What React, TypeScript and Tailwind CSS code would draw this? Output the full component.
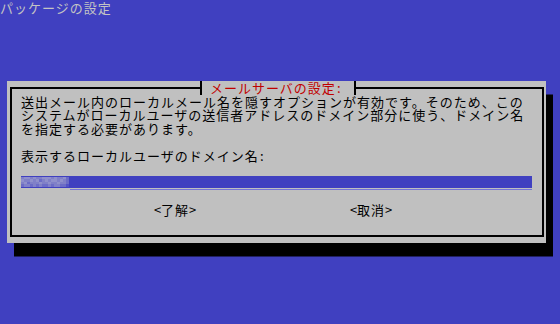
const mosaic = [
  [2, 3, 3, 2, 3, 2, 2, 3, 3, 3, 2, 3, 2, 2, 3, 1],
  [3, 2, 2, 3, 2, 3, 1, 2, 3, 2, 3, 3, 2, 3, 2, 1],
  [2, 3, 1, 2, 2, 2, 3, 2, 2, 3, 2, 2, 3, 2, 2, 1],
  [1, 2, 2, 1, 2, 1, 2, 1, 1, 2, 1, 2, 2, 1, 1, 0],
];

const shades = ["bg-[#5252c4]", "bg-[#6c6cc6]", "bg-[#8080c8]", "bg-[#9090cc]"];

function Row({ children, className = "" }: { children?: React.ReactNode; className?: string }) {
  return <div className={"h-[13.5px] whitespace-nowrap " + className}>{children}</div>;
}

function Half({ ch }: { ch: string }) {
  return <span className="inline-block w-[7px] text-center align-top">{ch}</span>;
}

function Button({ label }: { label: string }) {
  return (
    <span className="flex text-black">
      <Half ch="<" />
      <span>{label}</span>
      <Half ch=">" />
    </span>
  );
}

export default function App() {
  return (
    <div
      className="w-[560px] h-[324px] overflow-hidden bg-[#4040c0] text-[13px] leading-[13.5px] tracking-[1px]"
      style={{ fontFamily: '"Noto Sans CJK JP", "Noto Sans", sans-serif' }}
    >
      <Row className="text-[#c4c4c4] pt-[0.5px]">パッケージの設定</Row>

      <div className="relative mt-[67.5px] ml-[7px] w-[539px] h-[162px] bg-[#c0c0c0] pt-[6px] pl-[3px] pr-[2px] shadow-[7px_13.5px_0_#000]">
        {/* title sits on the top border */}
        <div className="absolute left-[193px] top-0 flex h-[13.5px]">
          <span className="w-[2px] h-full bg-black" />
          <div className="w-[152px] h-full bg-[#c0c0c0] pl-[8px] text-[#c00000] whitespace-nowrap">
            メールサーバの設定<Half ch=":" />
          </div>
          <span className="w-[2px] h-full bg-black" />
        </div>

        <div className="h-[150px] border-2 border-black">
          <div className="flex flex-col pl-[9px] pt-[5.5px] text-black">
            <Row>送出メール内のローカルメール名を隠すオプションが有効です。そのため、この</Row>
            <Row>システムがローカルユーザの送信者アドレスのドメイン部分に使う、ドメイン名</Row>
            <Row>を指定する必要があります。</Row>
            <Row />
            <Row>
              表示するローカルユーザのドメイン名<Half ch=":" />
            </Row>
            <Row />
            <div className="h-[13.5px] w-[511px]">
              <div className="flex h-[12px] bg-[#4040c0] pt-[1px]">
                <div className="grid grid-cols-[repeat(16,3px)] grid-rows-[repeat(4,2.5px)]">
                  {mosaic.flatMap((r, i) =>
                    r.map((s, j) => <span key={i + "-" + j} className={shades[s]} />)
                  )}
                </div>
              </div>
              <div className="ml-[49px] mt-[1px] h-[1px] bg-[#7474d8]" />
            </div>
            <Row />
            <div className="flex h-[13.5px] pl-[133px] gap-[154px]">
              <Button label="了解" />
              <Button label="取消" />
            </div>
          </div>
        </div>
      </div>
    </div>
  );
}
